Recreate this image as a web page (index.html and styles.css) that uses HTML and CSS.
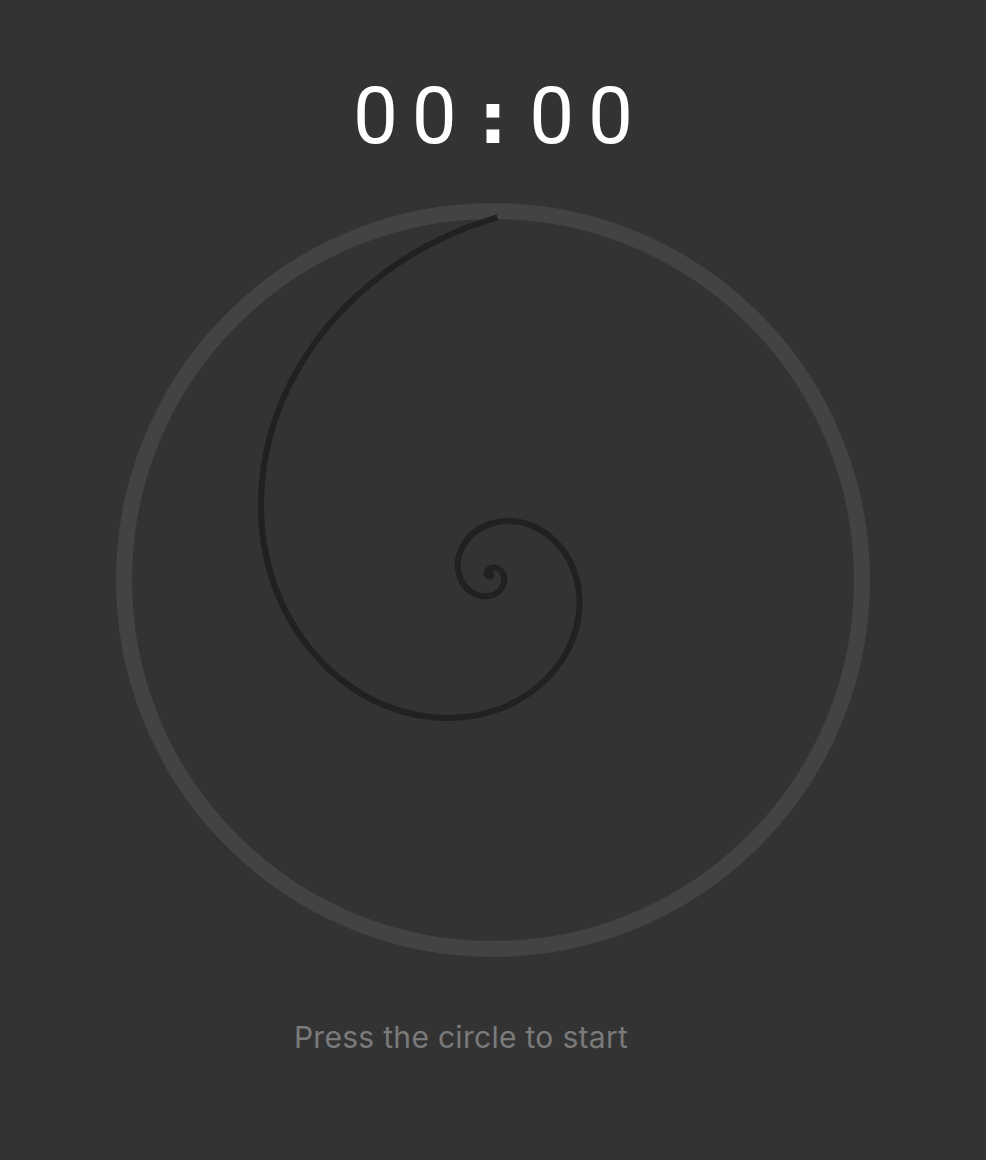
FILE: index.html
```html
<!DOCTYPE html>
<html lang="en">
<head>
<meta charset="utf-8">
<title>Timer</title>
<link rel="stylesheet" href="styles.css">
</head>
<body>
<main class="app">
  <div class="timer" aria-label="00:00">
    <span class="cell">0</span><span class="cell">0</span><span class="cell colon">:</span><span class="cell">0</span><span class="cell">0</span>
  </div>
  <button class="dial" type="button" aria-label="Start">
    <svg class="dial-svg" width="754" height="754" viewBox="116 203 754 754" xmlns="http://www.w3.org/2000/svg">
      <circle class="ring" cx="493" cy="580" r="369"/>
      <g transform="translate(491.5 575.5) scale(1.00916) translate(-490.6 -572.7)">
        <path class="spiral" d="M 496.4 217.8 L 490.6 219.48
          C 398.13 247.81 329.91 309.19 294.25 376.35
          C 258.59 443.51 254.79 515.55 272.3 572.7
          C 289.81 629.85 327.75 672.01 369.25 694.05
          C 410.75 716.09 455.28 718.44 490.6 707.62
          C 525.92 696.8 551.98 673.35 565.6 647.7
          C 579.22 622.05 580.68 594.53 573.99 572.7
          C 567.3 550.87 552.81 534.76 536.96 526.34
          C 521.11 517.92 504.09 517.03 490.6 521.16
          C 477.11 525.29 467.15 534.25 461.95 544.05
          C 456.75 553.85 456.2 564.36 458.75 572.7
          C 461.3 581.04 466.83 587.19 472.89 590.41
          C 478.95 593.63 485.45 593.97 490.6 592.39
          C 495.75 590.81 499.56 587.39 501.55 583.65
          C 503.54 579.91 503.75 575.89 502.77 572.7
          C 501.79 569.51 499.69 567.16 497.37 565.93
          C 495.05 564.7 492.57 564.58 490.6 565.18
          C 488.63 565.78 487.18 567.09 486.42 568.52
          C 485.66 569.95 485.58 571.48 485.95 572.7"/>
        <circle class="spiral-core" cx="488.8" cy="572.2" r="4.5"/>
      </g>
    </svg>
  </button>
  <div class="hint-row">
    <p class="hint">Press the circle to start</p>
  </div>
</main>
</body>
</html>
```

FILE: styles.css
```css
html, body {
  margin: 0;
  padding: 0;
  background: #333333;
}

body {
  min-height: 1160px;
  font-family: Inter, "Noto Sans", "Liberation Sans", sans-serif;
}

.app {
  display: flex;
  flex-direction: column;
  align-items: center;
  padding-top: 77px;
}

.timer {
  display: flex;
  align-items: baseline;
  height: 78px;
  font-family: Roboto, Inter, "Liberation Sans", sans-serif;
  font-size: 80px;
  line-height: 78px;
  font-weight: 400;
  color: #ffffff;
  font-variant-numeric: tabular-nums;
}

.cell {
  display: block;
  width: 58.8px;
  text-align: center;
}

.colon {
  font-family: "DejaVu Sans", "Liberation Sans", sans-serif;
  font-size: 72px;
  font-weight: 700;
}

.dial {
  margin: 48px 0 0;
  padding: 0;
  border: 0;
  background: none;
  cursor: pointer;
  display: block;
  width: 754px;
  height: 754px;
}

.dial-svg {
  display: block;
}

.ring {
  fill: none;
  stroke: #434343;
  stroke-width: 16;
}

.spiral {
  fill: none;
  stroke: #212121;
  stroke-width: 6;
  stroke-linecap: butt;
  stroke-linejoin: round;
}

.spiral-core {
  fill: #212121;
}

.hint-row {
  margin-top: 62px;
  padding-right: 64px;
  display: flex;
  justify-content: center;
}

.hint {
  margin: 0;
  font-size: 30px;
  line-height: 36px;
  letter-spacing: 0.3px;
  color: #7a7a7a;
}
```
